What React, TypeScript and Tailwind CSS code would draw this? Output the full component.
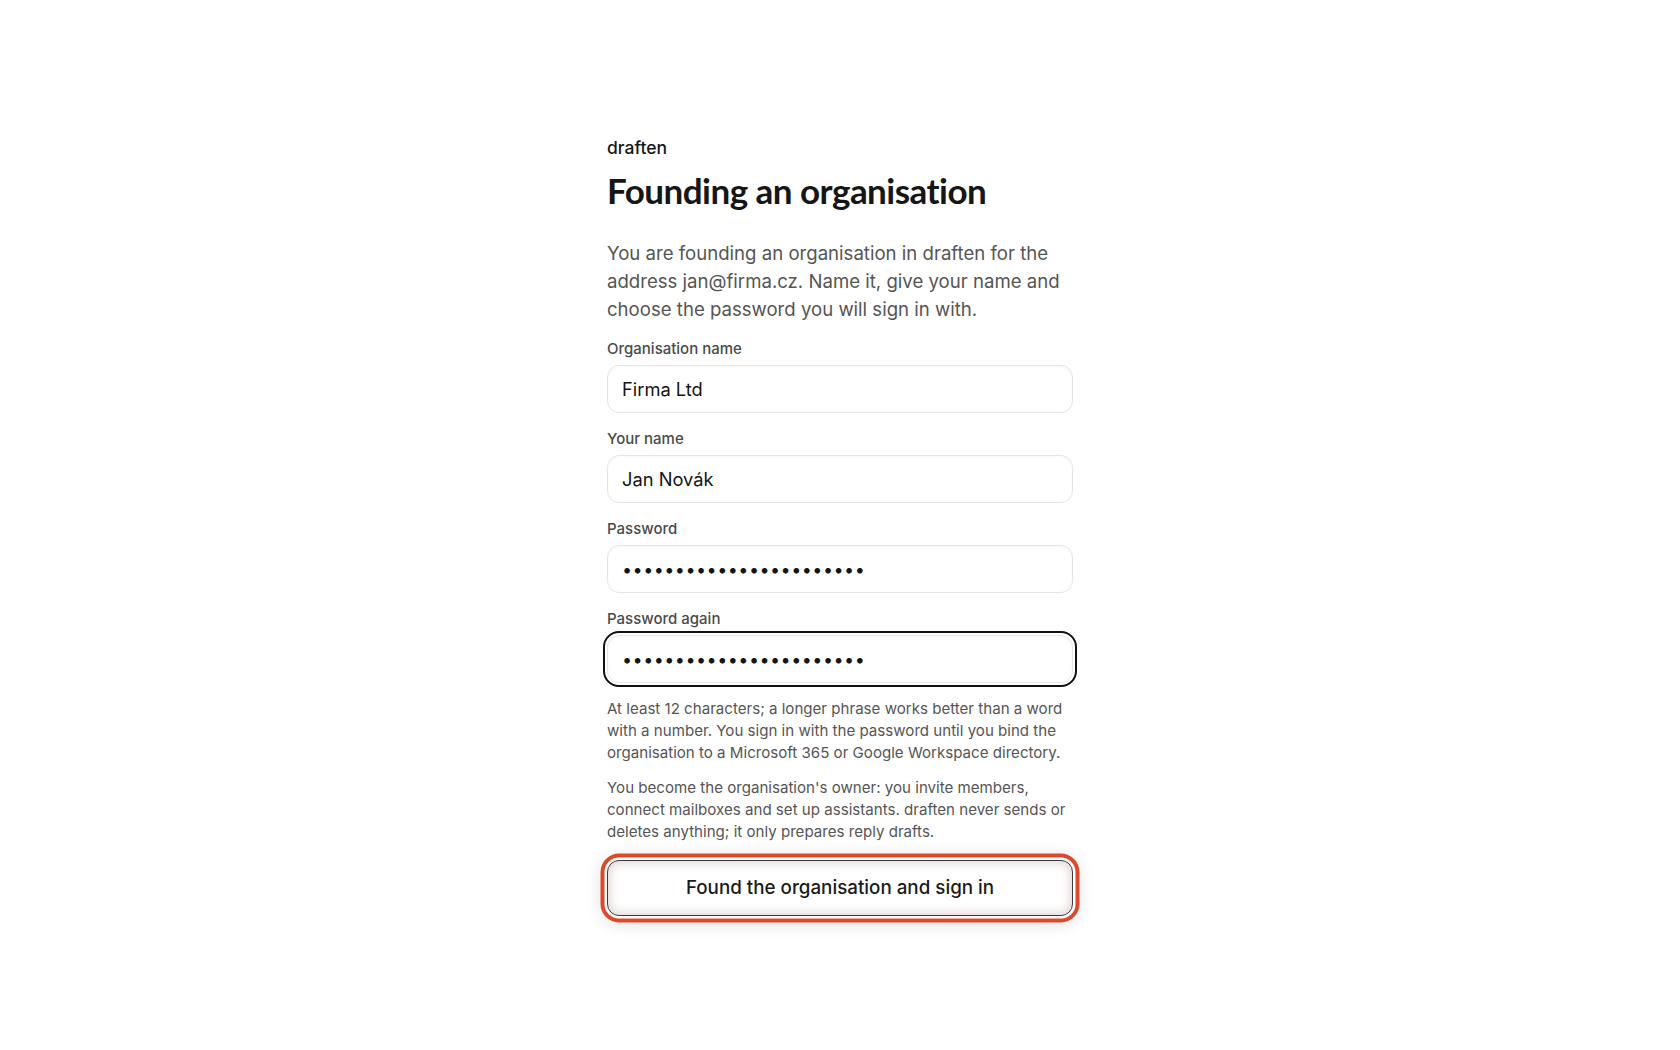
import React from "react";

function Field({
  label,
  value,
  type = "text",
  focused = false,
}: {
  label: string;
  value: string;
  type?: string;
  focused?: boolean;
}) {
  const isPw = type === "password";
  const base =
    "h-12 w-full rounded-xl border border-[#e5e5e5] bg-white px-3.5 text-[#141414] " +
    (isPw ? "text-[18px] tracking-[0.45px] " : "text-[18.3px] ");
  return (
    <label className="flex flex-col">
      <span className="text-[15px] leading-5 font-medium text-[#4a4a4a] mb-1.5">{label}</span>
      <input
        type={type}
        value={value}
        readOnly
        className={
          focused
            ? base + "outline-2 outline-offset-2 outline-[#111] shadow-[inset_0_1px_3px_rgba(0,0,0,0.04)]"
            : base + "outline-none shadow-[inset_0_1px_3px_rgba(0,0,0,0.03)]"
        }
        style={{ fontFamily: "Inter, 'Noto Sans', sans-serif" }}
      />
    </label>
  );
}

export default function App() {
  const pw = "abcdefghijklmnopqrstuvw";
  return (
    <div
      className="min-h-screen w-full bg-white flex flex-col items-center justify-center text-[#141414]"
      style={{ fontFamily: "Inter, 'Noto Sans', sans-serif" }}
    >
      <div className="w-[466px] flex flex-col">
        <div className="text-[17.5px] leading-7 font-medium text-[#161616]">draften</div>
        <h1
          className="mt-1.5 text-[35px] leading-[44px] font-bold tracking-[-0.015em] text-[#161616]"
          style={{ fontFamily: "Lato, 'Open Sans', sans-serif" }}
        >
          Founding an organisation
        </h1>
        <p className="mt-[27px] text-[18.6px] leading-7 text-[#555555]">
          You are founding an organisation in draften for the address jan@firma.cz. Name it, give your name and choose the password you will sign in with.
        </p>
        <form className="mt-4 flex flex-col" onSubmit={(e) => e.preventDefault()}>
          <div className="flex flex-col gap-4">
            <Field label="Organisation name" value="Firma Ltd" />
            <Field label="Your name" value="Jan Novák" />
            <Field label="Password" value={pw} type="password" />
            <Field label="Password again" value={pw} type="password" focused />
          </div>
          <p className="mt-[15px] text-[15.1px] leading-[22px] text-[#555555]">
            At least 12 characters; a longer phrase works better than a word with a number. You sign in with the password until you bind the organisation to a Microsoft 365 or Google Workspace directory.
          </p>
          <p className="mt-[13px] text-[15.1px] leading-[22px] text-[#555555]">
            You become the organisation's owner: you invite members, connect mailboxes and set up assistants. draften never sends or deletes anything; it only prepares reply drafts.
          </p>
          <button
            type="submit"
            className="mt-[17px] h-14 w-full rounded-xl border border-[#3a3a3a] bg-white text-[18.8px] font-medium text-[#1a1a1a] shadow-[0_0_0_2.5px_#ffffff,0_0_0_6.5px_#dc4a2c,0_2px_16px_7px_rgba(0,0,0,0.10),inset_0_0_10px_2px_rgba(150,100,100,0.28)]"
          >
            Found the organisation and sign in
          </button>
        </form>
      </div>
    </div>
  );
}
